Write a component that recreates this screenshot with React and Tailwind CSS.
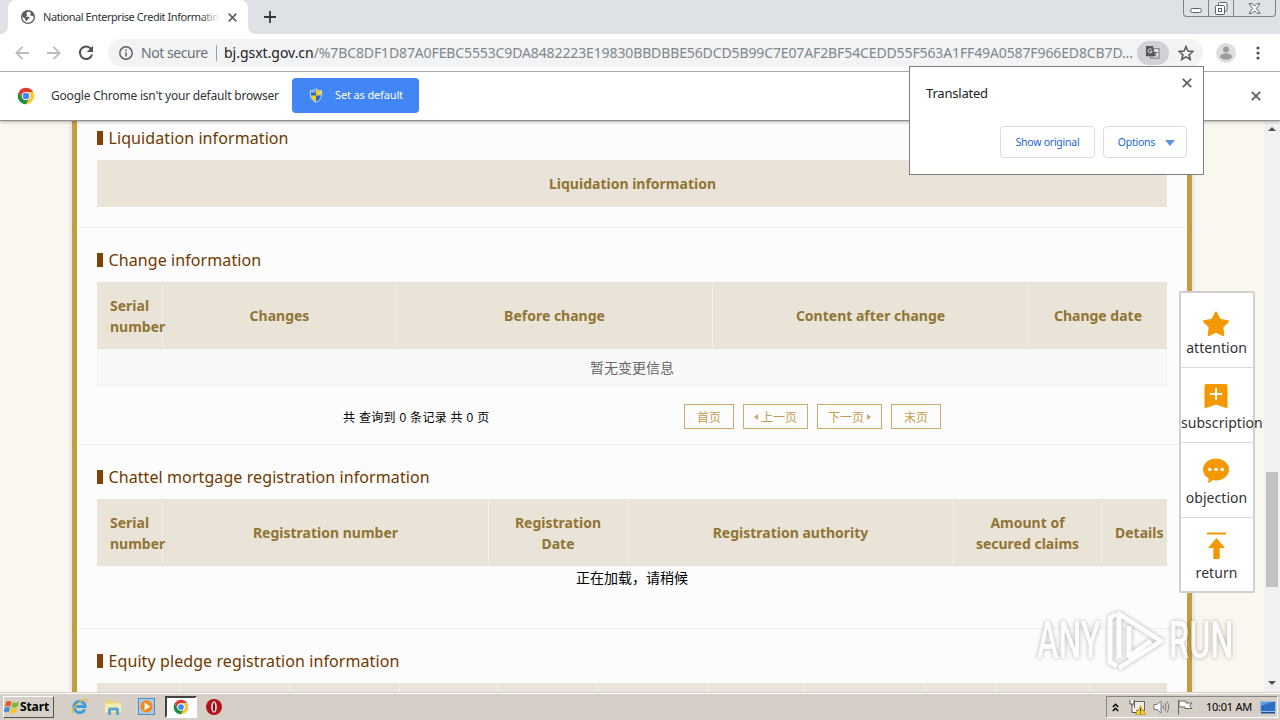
const changeCols = [
  { label: "Serial number", width: "w-[66px]" },
  { label: "Changes", width: "w-[234px]" },
  { label: "Before change", width: "w-[316px]" },
  { label: "Content after change", width: "w-[316px]" },
  { label: "Change date", width: "w-[138px]" },
];

const mortgageCols = [
  { label: "Serial number", width: "w-[66px]" },
  { label: "Registration number", width: "w-[326px]" },
  { label: "Registration Date", width: "w-[139px]" },
  { label: "Registration authority", width: "w-[326px]" },
  { label: "Amount of secured claims", width: "w-[148px]" },
  { label: "Details", width: "w-[65px]" },
];

const pledgeCols = [
  "w-[84px]",
  "w-[109px]",
  "w-[110px]",
  "w-[98px]",
  "w-[100px]",
  "w-[110px]",
  "w-[96px]",
  "w-[122px]",
  "w-[71px]",
  "w-[93px]",
  "w-[77px]",
];

function ChromeLogo({ className }) {
  return (
    <svg viewBox="0 0 48 48" className={className}>
      <path fill="#e33b2e" d="M24 13H43.05A22 22 0 0 0 4.95 13L14.5 29.5A11 11 0 0 1 24 13Z" />
      <path fill="#fcc934" d="M33.5 29.5L24 46A22 22 0 0 0 43.05 13H24A11 11 0 0 1 33.5 29.5Z" />
      <path fill="#1e8e3e" d="M14.5 29.5L4.95 13A22 22 0 0 0 24 46L33.5 29.5A11 11 0 0 1 14.5 29.5Z" />
      <circle cx="24" cy="24" r="11" fill="#fff" />
      <circle cx="24" cy="24" r="8.6" fill="#4285f4" />
    </svg>
  );
}

function CloseIcon({ className }) {
  return (
    <svg viewBox="0 0 10 10" className={className} fill="none" stroke="#5f6368" strokeWidth="1.9">
      <path d="M.8 .8L9.2 9.2M9.2 .8L.8 9.2" />
    </svg>
  );
}

function TabStrip() {
  return (
    <div className="flex h-[34px] shrink-0 items-start bg-[#dee1e6]">
      <div className="flex h-full w-2 items-end bg-white">
        <div className="h-full w-full rounded-br-lg bg-[#dee1e6]" />
      </div>
      <div className="flex h-full w-60 items-center rounded-t-lg bg-white pl-[13px]">
        <svg viewBox="0 0 16 16" className="size-[14px] shrink-0">
          <circle cx="8" cy="8" r="8" fill="#5a5d61" />
          <path fill="#fff" d="M8.4 1.6c-.9 1.1-2.3 1.3-2.3 2.6 0 .8 1.2.7 1.2 1.6 0 1-1.6.7-1.6 1.9H8.8c1 0 1.1 1.3.4 1.9-.7.5-1.6.4-1.7 1.5-.1 1-.6 1.6-1.5 1.6-1 0-.6-1.9-1.5-2.8C3.6 9.1 2 8.5 1.5 7.2A6.5 6.5 0 0 0 8 14.5c4-.2 6.5-3.3 6.5-6.5 0-.8-.9-.3-1.5-1.1-.6-.8-1.9.1-2.4-.9-.4-1 .7-1.3.6-2.3-.1-1-1.6-1.8-2.8-2.1Z" />
        </svg>
        <div className="relative ml-2 w-[177px] overflow-hidden text-[11px] tracking-[-0.45px] whitespace-nowrap text-[#303336]">
          National Enterprise Credit Informatio
          <span className="absolute inset-y-0 right-0 w-5 bg-linear-to-r from-white/0 to-white" />
        </div>
        <CloseIcon className="ml-2 size-[9px]" />
      </div>
      <div className="h-full w-2 bg-white">
        <div className="h-full w-full rounded-bl-lg bg-[#dee1e6]" />
      </div>
      <svg viewBox="0 0 12 12" className="mt-[11px] ml-2 size-3" stroke="#35383c" strokeWidth="1.8">
        <path d="M6 0V12M0 6H12" />
      </svg>
      <div className="mr-[4px] ml-auto flex h-[17px] w-[93px] rounded-b border border-t-0 border-[#7d848e]">
        <div className="flex w-[25px] items-end justify-center border-r border-[#7d848e] pb-[3px]">
          <div className="h-[5px] w-3 rounded-sm border border-[#5b616b] bg-white" />
        </div>
        <div className="flex w-[25px] items-center justify-center border-r border-[#7d848e]">
          <svg viewBox="0 0 13 13" className="size-[13px]" fill="#fff" stroke="#5b616b">
            <rect x="3.5" y=".5" width="8.5" height="8.5" rx="1" />
            <rect x=".5" y="3.5" width="9" height="9" rx="1" />
            <rect x="3.5" y="6.5" width="3" height="3" />
          </svg>
        </div>
        <div className="flex flex-1 items-center justify-center">
          <svg viewBox="0 0 13 11" className="h-[11px] w-[13px]" fill="#fff" stroke="#5b616b">
            <path d="M1 .7H4.2L6.5 3.2 8.8 .7H12L8.4 5.5 12 10.3H8.8L6.5 7.8 4.2 10.3H1L4.6 5.5Z" />
          </svg>
        </div>
      </div>
    </div>
  );
}

function Toolbar() {
  return (
    <div className="flex h-[38px] shrink-0 items-center border-b border-[#b3b6ba] bg-white pl-[15px]">
      <svg viewBox="0 0 14 14" className="size-[14px]" fill="none" stroke="#babcbe" strokeWidth="1.8">
        <path d="M14 7H1.5M7.5 .8L1.3 7L7.5 13.2" />
      </svg>
      <svg viewBox="0 0 14 14" className="ml-[18px] size-[14px]" fill="none" stroke="#babcbe" strokeWidth="1.8">
        <path d="M0 7H12.5M6.5 .8L12.7 7L6.5 13.2" />
      </svg>
      <svg viewBox="0 0 16 16" className="ml-[17px] size-4" fill="none" stroke="#4f5357" strokeWidth="2">
        <path d="M13.3 4.3A6.2 6.2 0 1 0 14.1 9.5" />
        <path d="M15 .8V7H8.8Z" fill="#4f5357" stroke="none" />
      </svg>
      <div className="ml-[14px] flex h-7 w-[1095px] items-center rounded-full bg-[#f1f3f4] pl-[11px] text-sm whitespace-nowrap text-[#6c7074]">
        <svg viewBox="0 0 14 14" className="size-[14px]" fill="none" stroke="#5f6368" strokeWidth="1.5">
          <circle cx="7" cy="7" r="6.2" />
          <path d="M7 6.2V10.5M7 3.4V5" />
        </svg>
        <span className="ml-2 w-[67px] tracking-[-0.45px]">Not secure</span>
        <span className="mx-2 h-4 w-px bg-[#9b9fa3]" />
        <span className="-ml-px tracking-[-0.02px] text-[#202124]">bj.gsxt.gov.cn</span>
        <span className="w-[823px] tracking-[-0.12px] text-[#80868b]">
          /%7BC8DF1D87A0FEBC5553C9DA8482223E19830BBDBBE56DCD5B99C7E07AF2BF54CEDD55F563A1FF49A0587F966ED8CB7D...
        </span>
        <div className="flex h-6 w-8 items-center justify-center rounded-full bg-[#cfd1d4]">
          <svg viewBox="0 0 16 16" className="size-[15px]">
            <rect x="6" y="4" width="9" height="10" fill="#e8eaed" stroke="#6a6e72" />
            <path d="M9 8H14M11.5 7V8C11.5 10 10 12 8.5 13M10 9.5L13 12.5" stroke="#6a6e72" fill="none" />
            <path d="M1 1H8.5L11 12H1Z" fill="#55595e" />
            <path d="M7.3 5A2.2 2.2 0 1 0 7.6 6.7H5.5" stroke="#e8eaed" fill="none" />
          </svg>
        </div>
        <svg viewBox="0 0 16 16" className="ml-[9px] size-4" fill="none" stroke="#55595e" strokeWidth="1.5">
          <path d="M8 1.5L9.9 6.1 14.9 6.5 11.1 9.7 12.3 14.5 8 11.9 3.7 14.5 4.9 9.7 1.1 6.5 6.1 6.1Z" />
        </svg>
      </div>
      <svg viewBox="0 0 20 20" className="ml-[13px] size-5">
        <circle cx="10" cy="10" r="10" fill="#dcdee0" />
        <circle cx="10" cy="6.5" r="3" fill="#9a9da0" />
        <ellipse cx="10" cy="13.5" rx="6" ry="3.2" fill="#9a9da0" />
      </svg>
      <svg viewBox="0 0 4 14" className="ml-[20px] h-[14px] w-1" fill="#4f5357">
        <circle cx="2" cy="2" r="1.6" />
        <circle cx="2" cy="7" r="1.6" />
        <circle cx="2" cy="12" r="1.6" />
      </svg>
    </div>
  );
}

function InfoBar() {
  return (
    <div className="relative z-10 flex h-[49px] shrink-0 items-center border-b border-[#8f8f8f] bg-white pl-[17px] shadow-[0_1px_3px_rgba(0,0,0,0.3)]">
      <ChromeLogo className="size-[18px]" />
      <span className="ml-4 w-[241px] text-xs tracking-[-0.2px] whitespace-nowrap text-[#303336]">
        Google Chrome isn't your default browser
      </span>
      <button className="mb-[2px] flex h-[35px] w-[127px] items-center rounded bg-[#4285f4] pl-[17px] text-[11px] tracking-[-0.14px] whitespace-nowrap text-white">
        <svg viewBox="0 0 14 16" className="mr-3 h-[15px] w-[14px]">
          <path fill="#2a66c8" stroke="#d9e4ee" d="M7 1C9 2.3 11 2.7 13 2.7V7C13 11 10 14 7 15.2 4 14 1 11 1 7V2.7C3 2.7 5 2.3 7 1Z" />
          <path fill="#f4d02c" d="M7 1.8V8H12.3C12.4 6.5 12.4 4.5 12.3 3.3 10.5 3.2 8.5 2.8 7 1.8ZM7 8V14.6C4.5 13.5 2.2 11.5 1.7 8Z" />
          <path fill="#7fb5ea" d="M2 3.5C3.5 3.4 5 3 6.5 2.2V5H2Z" />
        </svg>
        Set as default
      </button>
      <CloseIcon className="mr-[19px] ml-auto size-[10px]" />
    </div>
  );
}

function SectionTitle({ children }) {
  return (
    <h2 className="mb-[9px] flex h-[26px] items-center text-base tracking-[0.09px] whitespace-nowrap text-[#6f3a00]">
      <span className="mr-[5.5px] h-[14px] w-1.5 bg-[#7d4204]" />
      {children}
    </h2>
  );
}

function TableHead({ cols }) {
  return (
    <div className="flex h-[67px] border-y border-[#ebe3da] bg-[#eae4d8] text-sm leading-[21px] font-bold text-[#917434]">
      {cols.map((c, i) => (
        <div
          key={i}
          className={`${c.width} flex shrink-0 items-center border-r border-[#f3efe8] px-[13px] last:border-r-0`}
        >
          <div className="w-full text-center">{c.label}</div>
        </div>
      ))}
    </div>
  );
}

function PagerButton({ width, children }) {
  return (
    <button
      className={`${width} flex h-[25px] items-center justify-center gap-[3px] border border-[#cba968] pt-[2px] text-xs text-[#c29c50]`}
    >
      {children}
    </button>
  );
}

function SideItem({ label, children }) {
  return (
    <div className="flex h-[75px] flex-col items-center border-b border-[#d9d9d9] pt-[14px] pr-px last:h-[73px] last:border-b-0">
      <svg viewBox="0 0 28 28" className="mr-px size-[28px] shrink-0 overflow-visible" fill="#f39800">
        {children}
      </svg>
      {/* long labels run out past the right edge */}
      <div className="mt-[2px] w-full text-center text-sm leading-[22px] tracking-[0.05px] whitespace-nowrap text-[#333]">
        {label}
      </div>
    </div>
  );
}

function SidePanel() {
  return (
    <div className="absolute top-[170px] left-[1179px] w-[76px] rounded-xs border-2 border-[#d2d0cc] bg-white">
      <SideItem label="attention">
        <path
          stroke="#f39800"
          strokeWidth="2"
          strokeLinejoin="round"
          d="M14 5.5L17.7 12.7 26 14.2 20.3 20 21.3 28 14 24.6 6.7 28 7.7 20 2 14.2 10.3 12.7Z"
        />
      </SideItem>
      <SideItem label="subscription">
        <path d="M4 2H24Q25.5 2 25.5 3.5V26.5L14 22.5 2.5 26.5V3.5Q2.5 2 4 2Z" />
        <path d="M14 6V18M8 12H20" stroke="#fff" strokeWidth="2" />
      </SideItem>
      <SideItem label="objection">
        <path d="M14 1.5C21.5 1.5 27 6.5 27 12.5S21.5 23.5 14 23.5C12.8 23.5 11.8 23.4 10.8 23.1 9.5 24.3 7.8 25.7 5.8 26 6.5 24.5 6.8 22.8 6.5 21.3 3.2 19.5 1 16.3 1 12.5 1 6.5 6.5 1.5 14 1.5Z" />
        <g fill="#fff">
          <circle cx="7.8" cy="12.5" r="1.8" />
          <circle cx="14" cy="12.5" r="1.8" />
          <circle cx="20.2" cy="12.5" r="1.8" />
        </g>
      </SideItem>
      <SideItem label="return">
        <path d="M5 .5H24V2.5H5ZM14.5 6L23 16H17.7V27H11.3V16H6Z" />
      </SideItem>
    </div>
  );
}

function TranslatePopup() {
  return (
    <div className="absolute top-[66px] left-[909px] z-20 flex h-[109px] w-[295px] flex-col border border-[#7b7f83] bg-white px-4 text-[#202124]">
      <div className="flex justify-between">
        <span className="mt-4 text-[13px] leading-5 tracking-[-0.2px]">Translated</span>
        <CloseIcon className="mt-[11px] -mr-[5px] size-[10px]" />
      </div>
      <div className="mt-[23px] flex justify-end gap-2 text-[10.5px] tracking-[-0.25px] text-[#1967d2]">
        <button className="h-8 w-[95px] rounded border border-[#dadce0] pt-px">Show original</button>
        <button className="flex h-8 w-[84px] items-center justify-center gap-[10px] rounded border border-[#dadce0] pt-px pl-[3px]">
          Options
          <span className="border-x-[5px] border-t-[6px] border-x-transparent border-t-[#5a93e0]" />
        </button>
      </div>
    </div>
  );
}

function Watermark() {
  return (
    <div className="absolute top-[487px] left-[1037px] flex h-[66px] w-[198px] items-center justify-between font-['Roboto'] text-[52px] leading-[66px] font-medium text-white opacity-65 drop-shadow-[0_0_2px_rgba(70,70,70,0.65)]">
      <div className="w-[66px]">
        <span className="inline-block origin-left scale-x-[0.62]">ANY</span>
      </div>
      <svg viewBox="0 0 58 66" className="h-[66px] w-[58px]" fill="none" stroke="#fff" strokeWidth="5">
        <path d="M10 58L3 54V10L9 6M12 50V6L54 33 12 60M22 18V48L44 33" strokeLinejoin="round" />
      </svg>
      <div className="w-[66px]">
        <span className="inline-block origin-left scale-x-[0.62]">RUN</span>
      </div>
    </div>
  );
}

function Scrollbar() {
  return (
    <div className="flex w-4 shrink-0 flex-col items-center bg-[#f1f1f1] pt-[6px] pb-[7px]">
      <span className="border-x-4 border-b-4 border-x-transparent border-b-[#505050]" />
      <div className="mt-[341px] h-[115px] w-3 bg-[#c1c1c1]" />
      <span className="mt-auto border-x-4 border-t-4 border-x-transparent border-t-[#505050]" />
    </div>
  );
}

function Page() {
  return (
    <div className="relative flex min-h-0 flex-1 overflow-hidden bg-[#faf7ee]">
      <div className="flex flex-1">
        <div className="ml-[72px] w-[1120px] border-x-[5px] border-[#c69d3c] bg-[#fcfcfc] shadow-[0_0_5px_rgba(130,160,230,0.45)]">
          <section className="-mt-4 h-[123px] border-b border-[#eee] px-5 pt-5">
            <SectionTitle>Liquidation information</SectionTitle>
            <div className="flex h-[47px] items-center justify-center border border-[#ebe3da] bg-[#eae4d8] pl-px text-sm font-bold text-[#917434]">
              Liquidation information
            </div>
          </section>

          <section className="h-[217px] border-b border-[#eee] px-5 pt-[19px]">
            <SectionTitle>Change information</SectionTitle>
            <TableHead cols={changeCols} />
            <div className="flex h-[37px] items-center justify-center border border-t-0 border-[#eee] bg-[#f8f8f8] pt-px text-sm text-[#666]">
              暂无变更信息
            </div>
            <div className="mt-[18px] flex items-center pl-[246px] font-['Liberation_Sans','Noto_Sans_CJK_SC',sans-serif]">
              <span className="w-[341px] pt-[2px] text-xs tracking-[0.3px] whitespace-nowrap text-black">
                共 查询到 0 条记录 共 0 页
              </span>
              <div className="flex gap-[9px]">
                <PagerButton width="w-[50px]">首页</PagerButton>
                <PagerButton width="w-[65px]">
                  <span className="mb-[2px] border-y-[3px] border-r-4 border-y-transparent border-r-[#c8a866]" />
                  上一页
                </PagerButton>
                <PagerButton width="w-[65px]">
                  下一页
                  <span className="mb-[2px] border-y-[3px] border-l-4 border-y-transparent border-l-[#c8a866]" />
                </PagerButton>
                <PagerButton width="w-[50px]">末页</PagerButton>
              </div>
            </div>
          </section>

          <section className="h-[184px] border-b border-[#eee] px-5 pt-[19px]">
            <SectionTitle>Chattel mortgage registration information</SectionTitle>
            <TableHead cols={mortgageCols} />
            <p className="h-6 text-center text-sm leading-6 text-black">正在加载，请稍候</p>
          </section>

          <section className="px-5 pt-[19px]">
            <SectionTitle>Equity pledge registration information</SectionTitle>
            <div className="flex h-[67px] bg-[#eae4d8]">
              {pledgeCols.map((w, i) => (
                <div key={i} className={`${w} shrink-0 border-r border-[#f3efe8] last:border-r-0`} />
              ))}
            </div>
          </section>
        </div>
      </div>
      <Scrollbar />
      <SidePanel />
      <Watermark />
    </div>
  );
}

function Taskbar() {
  return (
    <div className="flex h-7 shrink-0 items-start border-t border-[#d6cfc8] bg-[#d6cfc8] text-black">
      <div className="flex h-full w-full items-start border-t border-white pt-[2px] pl-[3px]">
        <div className="flex h-[22px] w-[51px] items-center border border-t-white border-r-[#55524e] border-b-[#55524e] border-l-white text-xs font-bold tracking-[-0.1px]">
          <svg viewBox="0 0 16 16" className="size-4 shrink-0">
            <path fill="#e8572a" d="M2 3C4 1.5 6 1.7 7.6 2.8L6.3 7.6C4.5 6.6 3 6.7 1 7.7Z" />
            <path fill="#7ab83a" d="M8.6 3.2C10.5 4.3 12.5 4 15 2.8L13.6 7.6C11.5 8.8 9.5 8.8 7.3 7.9Z" />
            <path fill="#3f8fd8" d="M.8 8.8C2.5 7.8 4.3 7.7 6 8.6L4.7 13.3C3 12.4 1.5 12.5-.3 13.5Z" />
            <path fill="#f8c52c" d="M7 9C9 10 11 10 13.3 8.8L12 13.5C10 14.6 7.5 14.6 5.7 13.7Z" />
          </svg>
          Start
        </div>
        {/* Internet Explorer */}
        <svg viewBox="0 0 18 18" className="mt-[2px] ml-[17px] size-[17px]" fill="none">
          <path stroke="#3c9fdc" strokeWidth="3" d="M14.5 12A6 6 0 1 1 15 9H4.5" />
          <path stroke="#e8b93a" strokeWidth="1.5" d="M2 16.5C-.5 13 8 3 15 1.5 17.5 1 17 3.5 16 5" />
        </svg>
        {/* Explorer folder */}
        <svg viewBox="0 0 18 18" className="mt-[2px] ml-4 size-[18px]">
          <path fill="#ecd27a" d="M1 2H7L8.5 3.5H16V15H1Z" />
          <path fill="#f8ebb0" d="M1 5.5H17V14H1Z" />
          <path fill="#58a8dc" d="M4 17V11.5Q4 9.5 6 9.5H13Q15 9.5 15 11.5V17H12V12.5H7V17Z" />
        </svg>
        {/* Media player */}
        <svg viewBox="0 0 18 18" className="mt-[2px] ml-4 size-[17px]">
          <rect x=".5" y=".5" width="17" height="17" fill="#a8cdec" stroke="#4d87bd" />
          <circle cx="9" cy="9" r="6.5" fill="#f08a1c" />
          <path fill="#fff" d="M7 5L13 9 7 13Z" />
        </svg>
        <div className="ml-[10px] flex h-[22px] w-8 items-center justify-center border-2 border-t-[#44423f] border-r-white border-b-white border-l-[#44423f] bg-white">
          <ChromeLogo className="size-4" />
        </div>
        <svg viewBox="0 0 16 16" className="mt-[3px] ml-[9px] size-4">
          <circle cx="8" cy="8" r="8" fill="#b3121d" />
          <ellipse cx="8" cy="8" rx="2.8" ry="5.8" fill="#eee" />
          <ellipse cx="8" cy="8" rx="1.2" ry="4.6" fill="#8c0d16" />
        </svg>

        <div className="mr-[2px] ml-auto flex h-[22px] w-[172px] items-center border border-t-[#8a8681] border-r-white border-b-white border-l-[#8a8681] pl-[5px] text-[11px]">
          <svg viewBox="0 0 7 9" className="h-[9px] w-[7px]" fill="none" stroke="#000" strokeWidth="1.4">
            <path d="M.8 4L3.5 1.2 6.2 4M.8 8L3.5 5.2 6.2 8" />
          </svg>
          <svg viewBox="0 0 17 16" className="ml-[10px] h-4 w-[17px] shrink-0">
            <rect x="5.5" y="2.5" width="10" height="9" fill="#eee" stroke="#666" />
            <path fill="#fff" stroke="#555" d="M1 1V5H5V1M3 5V13.5H8" />
            <path fill="#f5d416" stroke="#a88a00" strokeWidth=".6" d="M11.5 6.5L16.5 15.5H6.5Z" />
            <path stroke="#222" d="M11.5 9.5V12.5M11.5 13.5V14.5" />
          </svg>
          <svg viewBox="0 0 17 14" className="ml-[7px] h-[14px] w-[17px] shrink-0" fill="none" stroke="#777">
            <path fill="#fff" d="M1 4.5H4L8 1V13L4 9.5H1Z" />
            <path d="M10 5Q11 7 10 9M12 3Q14 7 12 11M14 1.5Q17.5 7 14 12.5" />
          </svg>
          <svg viewBox="0 0 16 16" className="ml-[7px] size-4 shrink-0" fill="#fff" stroke="#666">
            <path d="M1.5 1V15.5M2 2H9V4H15L12.5 7 15 9.5H8V8H2Z" />
          </svg>
          <span className="ml-[13px] tracking-[-0.25px] whitespace-nowrap">10:01 AM</span>
          <svg viewBox="0 0 16 13" className="ml-2 h-[13px] w-4 shrink-0">
            <rect x=".5" y=".5" width="15" height="10" fill="#2a6fc4" stroke="#9cbbe0" />
            <path fill="#5f9be0" d="M1 1H12L1 5Z" />
            <path fill="#1d4f92" d="M1 11H15V12.5H1Z" />
          </svg>
        </div>
      </div>
    </div>
  );
}

export default function App() {
  return (
    <div className="relative flex h-[720px] w-[1280px] flex-col overflow-hidden bg-white font-['Noto_Sans','Noto_Sans_CJK_SC',sans-serif]">
      <TabStrip />
      <Toolbar />
      <InfoBar />
      <Page />
      <Taskbar />
      <TranslatePopup />
    </div>
  );
}
